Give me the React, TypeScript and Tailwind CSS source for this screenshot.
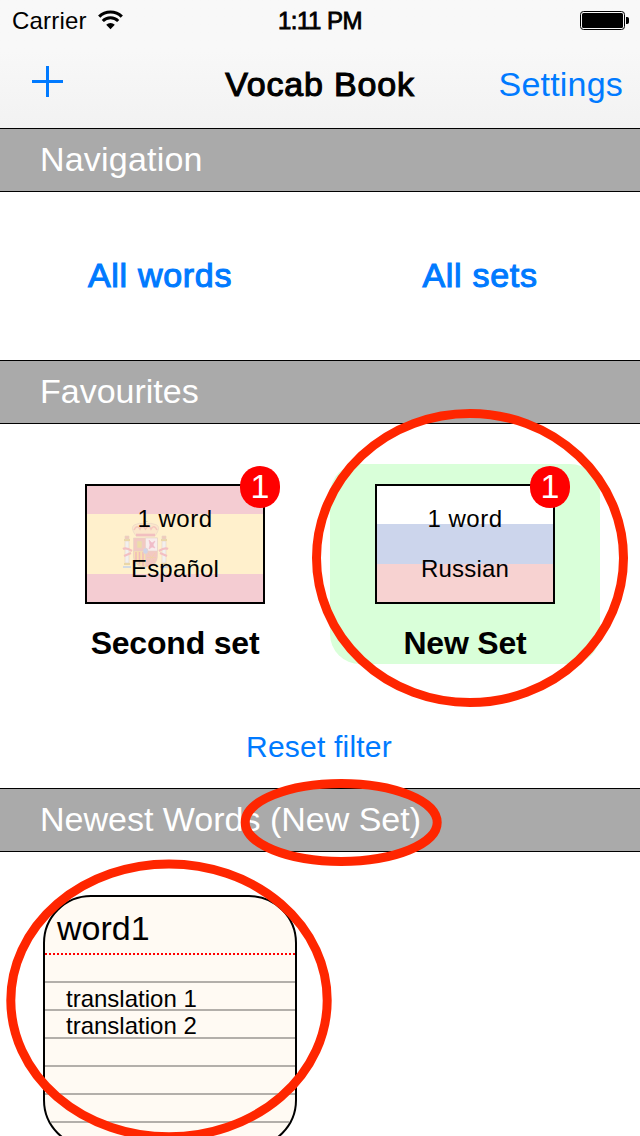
import type { ReactNode } from "react";

function WifiIcon() {
  return (
    <svg className="mb-[2px] ml-[11px] h-5 w-[25px]" viewBox="0 0 25 20" fill="none">
      <path d="M1.2 6.6A16.2 16.2 0 0 1 23.8 6.6" stroke="#000" strokeWidth="3.2" />
      <path d="M4.8 11A10.8 10.8 0 0 1 20.2 11" stroke="#000" strokeWidth="3" />
      <path d="M8.2 14.8A6 6 0 0 1 16.800 14.8L12.5 19.2Z" fill="#000" />
    </svg>
  );
}

function BatteryIcon() {
  return (
    <svg className="mb-[2px] h-[19px] w-[50px]" viewBox="0 0 50 19">
      <rect x="0.5" y="0.5" width="44" height="18" rx="3" fill="none" stroke="#000" />
      <rect x="2" y="2" width="41" height="15" rx="1.5" fill="#000" />
      <path d="M46 6h1.2a1.8 1.8 0 0 1 1.8 1.8v3.4a1.8 1.8 0 0 1-1.8 1.8H46Z" fill="#000" />
    </svg>
  );
}

function SectionHeader({ children }: { children: ReactNode }) {
  return (
    <h2 className="h-16 shrink-0 border-y border-black bg-[#aaaaaa] pl-10 text-[34px] leading-[60px] whitespace-nowrap text-white">
      {children}
    </h2>
  );
}

function SpainFlag() {
  return (
    <svg className="absolute inset-0 h-full w-full" viewBox="0 0 176 116" preserveAspectRatio="none">
      <rect width="176" height="116" fill="#f4ccd2" />
      <rect y="28" width="176" height="60" fill="#fff0cc" />
      <g stroke="#e6d3c6" strokeWidth="0.6">
        <path d="M49 50Q43 42 47 39Q52 36 58 38Q64 36 70 39Q74 42 68 50Z" fill="#fbe6cb" />
        <path d="M47 44Q50 38 53 43Q55 38 58.5 43Q62 38 64 43Q67 38 70 44" fill="none" stroke="#f4c6bd" strokeWidth="1.6" />
        <path d="M49 49h19" stroke="#f2bfc0" strokeWidth="2.6" />
        <path d="M58.5 34v5M56.500 35.500h4" stroke="#e2cfa8" strokeWidth="1" />
        <path d="M46.500 52h24v17q0 12-12 12t-12-12Z" fill="#f3c8c2" />
        <path d="M58.500 52h12v13h-12Z" fill="#f8ecec" />
        <path d="M46.500 65h12v16q-12-1-12-12Z" fill="#f9dfae" />
        <path d="M49 66v10M52.500 66v12M56 66v14" stroke="#f0bcbc" strokeWidth="1.6" />
        <path d="M50 55h5v7h-5Z" fill="#eedba8" />
        <path d="M62 54l3 3 3-2-2 4 2 3-3-1-3 2 1-4Z" fill="#f0bcc8" stroke="#f0bcc8" />
        <path d="M61 67l7 9M68 67l-7 9M60 71.500h9" stroke="#f0d3a3" />
        <ellipse cx="58.500" cy="65" rx="2.500" ry="3" fill="#d0d3e8" />
        <path d="M38 55h4v22h-4ZM75 55h4v22h-4Z" fill="#f2f0ee" />
        <path d="M37 54h6M74 54h6M37 78h6M74 78h6" stroke="#ead7a8" strokeWidth="1.8" />
        <path d="M38 50h4v3h-4ZM75 50h4v3h-4Z" fill="#f1cabb" />
        <path d="M36 63q3-2 9 2M81 63q-3-2-9 2M37 70l7-3M80 70l-7-3" fill="none" stroke="#f3bfc2" strokeWidth="2.2" />
        <path d="M36 81h8M73 81h8" stroke="#d3dae2" strokeWidth="2" />
      </g>
    </svg>
  );
}

function RussiaFlag() {
  return (
    <div className="absolute inset-0 flex flex-col bg-white">
      <div className="h-[38px]" />
      <div className="h-[39.5px] bg-[#ccd5ec]" />
      <div className="flex-1 bg-[#f7d2d1]" />
    </div>
  );
}

type SetCardProps = { flag: ReactNode; language: ReactNode; name: ReactNode; selected?: boolean };

function SetCard({ flag, language, name, selected }: SetCardProps) {
  return (
    <div className={`flex h-[200px] w-[270px] flex-col items-center rounded-[30px] pt-5 ${selected ? "bg-[#d9ffd9]" : ""}`}>
      <div className="relative h-[120px] w-[180px] border-2 border-black">
        {flag}
        <div className="relative flex h-full flex-col items-center justify-center text-2xl leading-[50px] whitespace-nowrap">
          <span className="h-[50px] tracking-[0.5px]">1 word</span>
          <span className="h-[50px] tracking-[0.2px]">{language}</span>
        </div>
        <div className="absolute -top-5 -right-[17px] h-[42px] w-10 rounded-[20px] bg-[#ff0000] text-center text-[34px] leading-10 text-white">
          1
        </div>
      </div>
      <p className="mt-[18px] text-[32px] leading-[42px] font-bold tracking-[-0.2px] whitespace-nowrap">{name}</p>
    </div>
  );
}

function WordCard() {
  return (
    <div className="h-[253px] w-[254px] shrink-0 overflow-hidden rounded-[48px] border-2 border-black bg-[#fffaf3]">
      <div className="h-14 pl-3 text-[34px] leading-[63px]">word1</div>
      <div className="h-0.5 bg-[repeating-linear-gradient(90deg,#f00_0_2px,transparent_2px_4px)]" />
      <div className="h-7 border-b-2 border-[#b3afaa]" />
      <div className="h-7 border-b-2 border-[#b3afaa] pl-[21px] text-2xl leading-[31px] whitespace-nowrap">translation 1</div>
      <div className="h-7 border-b-2 border-[#b3afaa] pl-[21px] text-2xl leading-[29px] whitespace-nowrap">translation 2</div>
      <div className="h-7 border-b-2 border-[#b3afaa]" />
      <div className="h-7 border-b-2 border-[#b3afaa]" />
      <div className="h-7 border-b-2 border-[#b3afaa]" />
    </div>
  );
}

export default function App() {
  return (
    <div className="relative flex h-[1136px] w-[640px] flex-col overflow-hidden bg-white font-['Liberation_Sans',Arial,sans-serif] text-black">
      <header className="h-32 shrink-0 bg-linear-to-b from-[#f8f8f8] from-40% to-[#f2f2f2]">
        <div className="grid h-10 grid-cols-[1fr_auto_1fr] items-center text-2xl leading-[42px] whitespace-nowrap">
          <div className="flex items-center pl-3">
            <span className="tracking-[0.2px]">Carrier</span>
            <WifiIcon />
          </div>
          <span className="tracking-[-0.5px] [-webkit-text-stroke:0.8px_black]">1:11 PM</span>
          <div className="flex justify-end pr-[10px]">
            <BatteryIcon />
          </div>
        </div>
        <div className="grid h-[88px] grid-cols-[1fr_auto_1fr] items-center text-[34px] leading-[88px] whitespace-nowrap">
          <svg className="mb-[6px] ml-8 h-[31px] w-[31px]" viewBox="0 0 31 31" fill="#007aff">
            <path d="M14 0h3v14h14v3H17v14h-3V17H0v-3h14Z" />
          </svg>
          <h1 className="tracking-[0.8px] [-webkit-text-stroke:1.1px_black]">Vocab Book</h1>
          <span className="pr-[17px] text-right tracking-[0.2px] text-[#007aff]">Settings</span>
        </div>
      </header>

      <SectionHeader>
        <span className="tracking-[0.2px]">Navigation</span>
      </SectionHeader>
      <nav className="grid h-[168px] shrink-0 grid-cols-2 items-start text-center text-[34px] leading-[166px] tracking-[0.7px] whitespace-nowrap text-[#007aff] [-webkit-text-stroke:1.1px_#007aff]">
        <span>All words</span>
        <span>All sets</span>
      </nav>

      <SectionHeader>Favourites</SectionHeader>
      <section className="flex h-[364px] shrink-0 flex-col items-center pt-10">
        <div className="flex gap-5">
          <SetCard flag={<SpainFlag />} language="Español" name="Second set" />
          <SetCard flag={<RussiaFlag />} language="Russian" name="New Set" selected />
        </div>
        <span className="mt-[62px] mr-[2px] text-[30px] leading-[42px] tracking-[0.2px] text-[#007aff]">Reset filter</span>
      </section>

      <SectionHeader>Newest Words (New Set)</SectionHeader>
      <section className="pt-[43px] pl-[43px]">
        <WordCard />
      </section>

      <svg className="absolute inset-0 h-full w-full" viewBox="0 0 640 1136" fill="none" stroke="#ff2600" strokeWidth="9">
        <ellipse cx="470" cy="558" rx="153.5" ry="144.5" />
        <ellipse cx="341.2" cy="822.4" rx="96" ry="39" />
        <ellipse cx="169" cy="1000.4" rx="158.2" ry="136.4" />
      </svg>
    </div>
  );
}
